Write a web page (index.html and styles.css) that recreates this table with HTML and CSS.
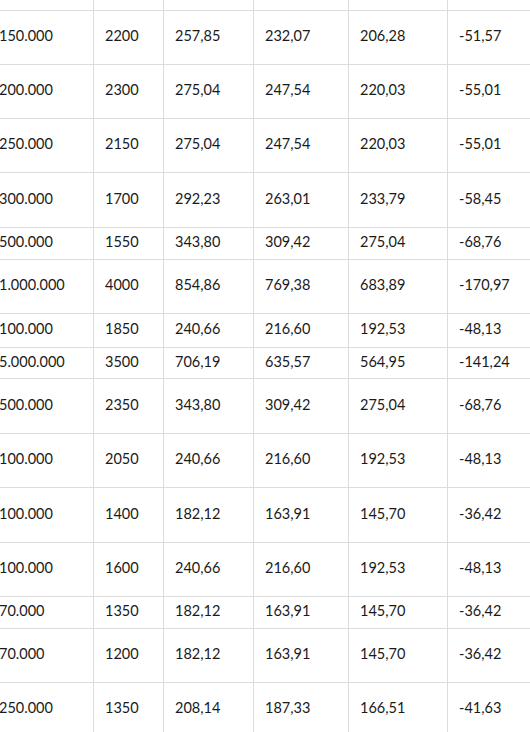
FILE: index.html
```html
<!DOCTYPE html>
<html lang="ru">
<head>
<meta charset="utf-8">
<title>Таблица</title>
<link rel="stylesheet" href="styles.css">
</head>
<body>
<div class="viewport">
<table class="price-table">
<colgroup>
<col class="c1"><col class="c2"><col class="c3"><col class="c4"><col class="c5"><col class="c6">
</colgroup>
<tbody>
<tr class="r-top"><td></td><td></td><td></td><td></td><td></td><td></td></tr>
<tr class="r54"><td>150.000</td><td>2200</td><td>257,85</td><td>232,07</td><td>206,28</td><td>-51,57</td></tr>
<tr class="r54"><td>200.000</td><td>2300</td><td>275,04</td><td>247,54</td><td>220,03</td><td>-55,01</td></tr>
<tr class="r54"><td>250.000</td><td>2150</td><td>275,04</td><td>247,54</td><td>220,03</td><td>-55,01</td></tr>
<tr class="r55"><td>300.000</td><td>1700</td><td>292,23</td><td>263,01</td><td>233,79</td><td>-58,45</td></tr>
<tr class="r32"><td>500.000</td><td>1550</td><td>343,80</td><td>309,42</td><td>275,04</td><td>-68,76</td></tr>
<tr class="r54"><td>1.000.000</td><td>4000</td><td>854,86</td><td>769,38</td><td>683,89</td><td>-170,97</td></tr>
<tr class="r34"><td>100.000</td><td>1850</td><td>240,66</td><td>216,60</td><td>192,53</td><td>-48,13</td></tr>
<tr class="r31"><td>5.000.000</td><td>3500</td><td>706,19</td><td>635,57</td><td>564,95</td><td>-141,24</td></tr>
<tr class="r55"><td>500.000</td><td>2350</td><td>343,80</td><td>309,42</td><td>275,04</td><td>-68,76</td></tr>
<tr class="r54"><td>100.000</td><td>2050</td><td>240,66</td><td>216,60</td><td>192,53</td><td>-48,13</td></tr>
<tr class="r55"><td>100.000</td><td>1400</td><td>182,12</td><td>163,91</td><td>145,70</td><td>-36,42</td></tr>
<tr class="r54"><td>100.000</td><td>1600</td><td>240,66</td><td>216,60</td><td>192,53</td><td>-48,13</td></tr>
<tr class="r32"><td>70.000</td><td>1350</td><td>182,12</td><td>163,91</td><td>145,70</td><td>-36,42</td></tr>
<tr class="r54"><td>70.000</td><td>1200</td><td>182,12</td><td>163,91</td><td>145,70</td><td>-36,42</td></tr>
<tr class="r54"><td>250.000</td><td>1350</td><td>208,14</td><td>187,33</td><td>166,51</td><td>-41,63</td></tr>
</tbody>
</table>
</div>
</body>
</html>
```
FILE: styles.css
```css
html, body {
  margin: 0;
  padding: 0;
  background: #ffffff;
  overflow: hidden;
}

.viewport {
  width: 530px;
  height: 732px;
  overflow: hidden;
}

.price-table {
  margin-left: -13px;
  border-collapse: collapse;
  table-layout: fixed;
  width: 561px;
  font-family: Lato, "Open Sans", sans-serif;
  font-size: 14.5px;
  color: #1a1a1a;
}

.c1 { width: 106px; }
.c2 { width: 70px; }
.c3 { width: 90px; }
.c4 { width: 95px; }
.c5 { width: 99px; }
.c6 { width: 101px; }

.price-table td {
  border: 1px solid #dcdcdc;
  padding: 0 0 3px 11px;
  vertical-align: middle;
  white-space: nowrap;
  box-sizing: border-box;
}

.price-table tr:first-child td { border-top: none; padding: 0; }

.r-top td { height: 10px; }
.r54 td { height: 54px; }
.r55 td { height: 55px; }
.r32 td { height: 32px; }
.r34 td { height: 34px; }
.r31 td { height: 31px; }
```
